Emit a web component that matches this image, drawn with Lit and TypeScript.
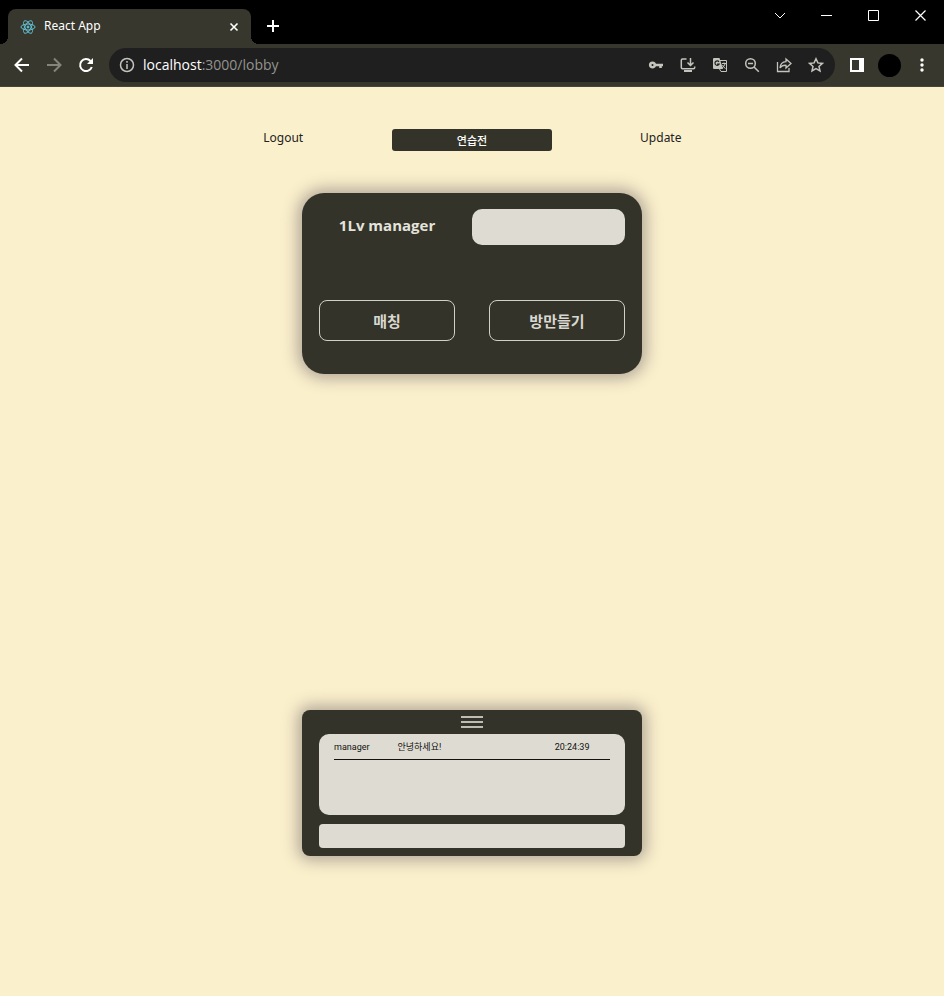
import { LitElement, html, css } from "lit";
import { customElement, property } from "lit/decorators.js";

const icon = css`
  :host { display: block; }
  svg { display: block; fill: none; stroke: currentColor; }
  button, a { font: inherit; color: inherit; }
  button { display: flex; align-items: center; justify-content: center; padding: 0; border: 0; background: none; cursor: pointer; }
`;

@customElement("browser-bar")
export class BrowserBar extends LitElement {
  static styles = [icon, css`
    :host { background: #000; color: #fff; font-family: "Noto Sans", "Noto Sans CJK KR", sans-serif; }
    .strip { display: flex; align-items: flex-end; height: 44px; padding-left: 8px; }
    .tab { position: relative; display: flex; align-items: center; box-sizing: border-box; width: 243px; height: 35px; padding: 0 10px 0 12px; border-radius: 8px 8px 0 0; background: #37372d; font-size: 12px; }
    .tab::before, .tab::after { content: ""; position: absolute; bottom: 0; width: 8px; height: 8px; }
    .tab::before { right: 100%; background: radial-gradient(circle at 0 0, #000 8px, #37372d 8px); }
    .tab::after { left: 100%; background: radial-gradient(circle at 100% 0, #000 8px, #37372d 8px); }
    .react { color: #62bfd2; }
    .title { flex: 1; margin-left: 8px; line-height: 16px; padding-bottom: 2px; }
    .close { width: 14px; height: 14px; }
    .plus { width: 28px; height: 36px; margin-left: 8px; }
    .window { display: flex; align-self: flex-start; margin-left: auto; }
    .window button { width: 47px; height: 31px; }
    .tools { display: flex; align-items: center; box-sizing: border-box; height: 43px; padding: 0 12px; background: #37372d; border-bottom: 1px solid #45453a; }
    .nav { display: flex; gap: 12px; }
    .nav button { width: 20px; height: 20px; }
    .nav .off { color: #85857c; }
    .address { display: flex; flex: 1; align-items: center; box-sizing: border-box; height: 34px; margin-left: 13px; padding: 0 9px 0 8px; border-radius: 17px; background: #1f1f20; color: #c4c4bd; }
    .url { flex: 1; margin-left: 6px; font-family: "Open Sans", sans-serif; font-size: 14px; line-height: 20px; color: #94948e; }
    .host { color: #fff; }
    .actions { display: flex; gap: 12px; }
    .actions button { width: 20px; height: 20px; }
    .panel { margin-left: 12px; width: 20px; height: 20px; }
    .avatar { margin-left: 11px; width: 23px; height: 23px; border-radius: 50%; background: #000; }
    .menu { margin-left: 11px; width: 20px; height: 20px; }
  `];

  render() {
    return html`
      <div class="strip">
        <div class="tab">
          <svg class="react" width="16" height="16" viewBox="0 0 16 16"><ellipse cx="8" cy="8" rx="7" ry="3"/><ellipse cx="8" cy="8" rx="7" ry="3" transform="rotate(60 8 8)"/><ellipse cx="8" cy="8" rx="7" ry="3" transform="rotate(120 8 8)"/><circle cx="8" cy="8" r="1" fill="currentColor"/></svg>
          <span class="title">React App</span>
          <button class="close" aria-label="Close tab"><svg width="10" height="10" viewBox="0 0 10 10" stroke-width="1.6"><path d="M1.500 1.500l7 7M8.500 1.500l-7 7"/></svg></button>
        </div>
        <button class="plus" aria-label="New tab"><svg width="12" height="12" viewBox="0 0 12 12" stroke-width="2"><path d="M6 0v12M0 6h12"/></svg></button>
        <div class="window">
          <button aria-label="Search tabs"><svg width="12" height="8" viewBox="0 0 12 8"><path d="M1 1l5 5 5-5"/></svg></button>
          <button aria-label="Minimize"><svg width="11" height="11" viewBox="0 0 11 11"><path d="M0 5.5h11"/></svg></button>
          <button aria-label="Maximize"><svg width="11" height="11" viewBox="0 0 11 11"><path d="M.5.5h10v10H.5z"/></svg></button>
          <button aria-label="Close window"><svg width="11" height="11" viewBox="0 0 11 11" stroke-width="1.2"><path d="M.5.5l10 10M10.500 .5l-10 10"/></svg></button>
        </div>
      </div>
      <div class="tools">
        <div class="nav">
          <button aria-label="Back"><svg width="16" height="16" viewBox="0 0 16 16" stroke-width="2"><path d="M15 8H2M8 1.500L1.500 8 8 14.500"/></svg></button>
          <button class="off" aria-label="Forward"><svg width="16" height="16" viewBox="0 0 16 16" stroke-width="2"><path d="M1 8h13M8 1.500L14.500 8 8 14.500"/></svg></button>
          <button aria-label="Reload"><svg width="16" height="16" viewBox="0 0 16 16" stroke-width="2"><path d="M13.800 10A6 6 0 1 1 12.500 4"/><path d="M15 1v6H9z" fill="currentColor" stroke="none"/></svg></button>
        </div>
        <div class="address">
          <svg width="20" height="16" viewBox="0 0 20 16" stroke-width="1.5"><circle cx="10" cy="8" r="6.500"/><path d="M10 7v5M10 4v1.800"/></svg>
          <div class="url"><span class="host">localhost</span>:3000/lobby</div>
          <div class="actions">
            <button aria-label="Passwords"><svg width="16" height="16" viewBox="0 0 16 16"><path stroke-width="2.600" d="M6.800 8A2.300 2.300 0 1 1 2.200 8a2.300 2.300 0 0 1 4.600 0zM7 8h8M12.500 8v3"/></svg></button>
            <button aria-label="Install app"><svg width="16" height="16" viewBox="0 0 16 16" stroke-width="1.500"><path d="M6.500 2H2.500Q1.300 2 1.300 3.200V10.500Q1.300 11.700 2.500 11.700H13.500Q14.700 11.700 14.700 10.500V9.500M10.500 1v7M7.500 5.500l3 3 3-3"/><path d="M4 14h8" stroke-width="2"/></svg></button>
            <button aria-label="Translate"><svg width="16" height="16" viewBox="0 0 16 16"><path fill="currentColor" stroke="none" d="M2 1h5.500l3.500 11H2q-1 0-1-1V2q0-1 1-1z"/><path d="M8 3.500h6.500v11H9l-1.500-2.500M10 6.500h4M12 5.500v1M13 7q-1 3-3 4M10.500 8q1 2.500 3 3.500"/><path stroke="#1f1f20" stroke-width="1.200" d="M7 4.800A2.200 2.200 0 1 0 7.200 7H5"/></svg></button>
            <button aria-label="Zoom"><svg width="16" height="16" viewBox="0 0 16 16" stroke-width="1.500"><circle cx="6.500" cy="6.500" r="4.800"/><path d="M10 10l4.800 4.800M4 6.500h5"/></svg></button>
            <button aria-label="Share"><svg width="16" height="16" viewBox="0 0 16 16" stroke-width="1.300"><path d="M1.500 5v9.500H13V11M4 11q.5-6 6-6.300V2l5 4.500-5 4.500V8.300Q6 8 4 11z"/></svg></button>
            <button aria-label="Bookmark"><svg width="16" height="16" viewBox="0 0 16 16" stroke-width="1.500"><path d="M8 1.800l1.900 4.100 4.500.5-3.400 3 1 4.500L8 11.600l-4 2.300 1-4.500-3.400-3 4.500-.5z"/></svg></button>
          </div>
        </div>
        <button class="panel" aria-label="Side panel"><svg width="14" height="14" viewBox="0 0 14 14" stroke-width="2"><path d="M1 1h12v12H1z"/><path d="M9 1h4v12H9z" fill="currentColor" stroke="none"/></svg></button>
        <button class="avatar" aria-label="Profile"></button>
        <button class="menu" aria-label="Menu"><svg width="4" height="14" viewBox="0 0 4 14"><g fill="currentColor" stroke="none"><circle cx="2" cy="2" r="1.700"/><circle cx="2" cy="7" r="1.700"/><circle cx="2" cy="12" r="1.700"/></g></svg></button>
      </div>
    `;
  }
}

interface Message { from: string; text: string; time: string; }

@customElement("chat-box")
export class ChatBox extends LitElement {
  @property({ attribute: false }) messages: Message[] = [];

  static styles = css`
    :host { display: block; box-sizing: border-box; padding: 0 17px 8px; border-radius: 8px; background: #333329; box-shadow: 0 0 16px 4px rgb(60 50 70 / 40%); }
    .handle { display: flex; align-items: center; justify-content: center; width: 100%; height: 24px; padding: 0; border: 0; background: none; cursor: pointer; }
    .handle svg { display: block; stroke: #bdbdb4; stroke-width: 2; }
    .log { box-sizing: border-box; min-height: 81px; padding: 4px 15px; border-radius: 10px; background: #dedcd2; font-family: Roboto, "Noto Sans CJK KR", sans-serif; font-size: 9px; line-height: 18px; color: #111; }
    .row { display: grid; grid-template-columns: 23% 1fr 20%; padding-bottom: 3px; border-bottom: 1px solid #111; }
    .entry { display: block; box-sizing: border-box; width: 100%; height: 24px; margin-top: 9px; padding: 0 8px; border: 0; border-radius: 4px; background: #dedcd2; font: inherit; }
  `;

  render() {
    return html`
      <button class="handle" aria-label="Toggle chat"><svg width="22" height="14" viewBox="0 0 22 14"><path d="M0 2h22M0 7h22M0 12h22"/></svg></button>
      <div class="log">
        ${this.messages.map((m) => html`<div class="row"><span>${m.from}</span><span>${m.text}</span><time>${m.time}</time></div>`)}
      </div>
      <input class="entry" type="text" aria-label="Message" />
    `;
  }
}

@customElement("app-root")
export class AppRoot extends LitElement {
  private messages: Message[] = [{ from: "manager", text: "안녕하세요!", time: "20:24:39" }];

  static styles = css`
    :host { display: flex; flex-direction: column; min-height: 100vh; background: #fbf0cc; font-family: "Noto Sans", "Noto Sans CJK KR", sans-serif; }
    main { display: flex; flex: 1; flex-direction: column; align-items: center; padding: 42px 0 140px; }
    nav { display: grid; grid-template-columns: repeat(3, 1fr); align-items: start; justify-items: center; width: 60%; font-size: 12px; line-height: 18px; }
    nav a { color: #222; text-decoration: none; }
    .practice { width: 85%; height: 22px; padding: 0; border: 0; border-radius: 3px; background: #333329; color: #fff; font: 500 11px/22px "Noto Sans CJK KR", sans-serif; cursor: pointer; }
    .card { display: grid; grid-template-columns: 1fr 1fr; box-sizing: border-box; width: 36%; margin: 42px 0 48px; padding: 16px 17px 33px; column-gap: 34px; row-gap: 55px; border-radius: 22px; background: #333329; color: #e4e4dc; box-shadow: 0 0 16px 4px rgb(60 50 70 / 40%); }
    .name { margin: 0; font-family: "Open Sans", sans-serif; font-size: 15px; line-height: 32px; font-weight: 700; text-align: center; }
    .field { box-sizing: border-box; height: 36px; margin-left: -17px; padding: 0 10px; border: 0; border-radius: 10px; background: #dedcd2; min-width: 0; }
    .play { height: 41px; padding: 0; border: 1px solid #d0d0c8; border-radius: 8px; background: none; color: #d8d8d0; font: 700 15px/20px "Noto Sans CJK KR", sans-serif; cursor: pointer; }
    chat-box { width: 36%; margin-top: auto; }
  `;

  render() {
    return html`
      <browser-bar></browser-bar>
      <main>
        <nav>
          <a href="#logout">Logout</a>
          <button class="practice">연습전</button>
          <a href="#update">Update</a>
        </nav>
        <section class="card">
          <h1 class="name">1Lv manager</h1>
          <input class="field" type="text" aria-label="Room" />
          <button class="play">매칭</button>
          <button class="play">방만들기</button>
        </section>
        <chat-box .messages=${this.messages}></chat-box>
      </main>
    `;
  }
}
